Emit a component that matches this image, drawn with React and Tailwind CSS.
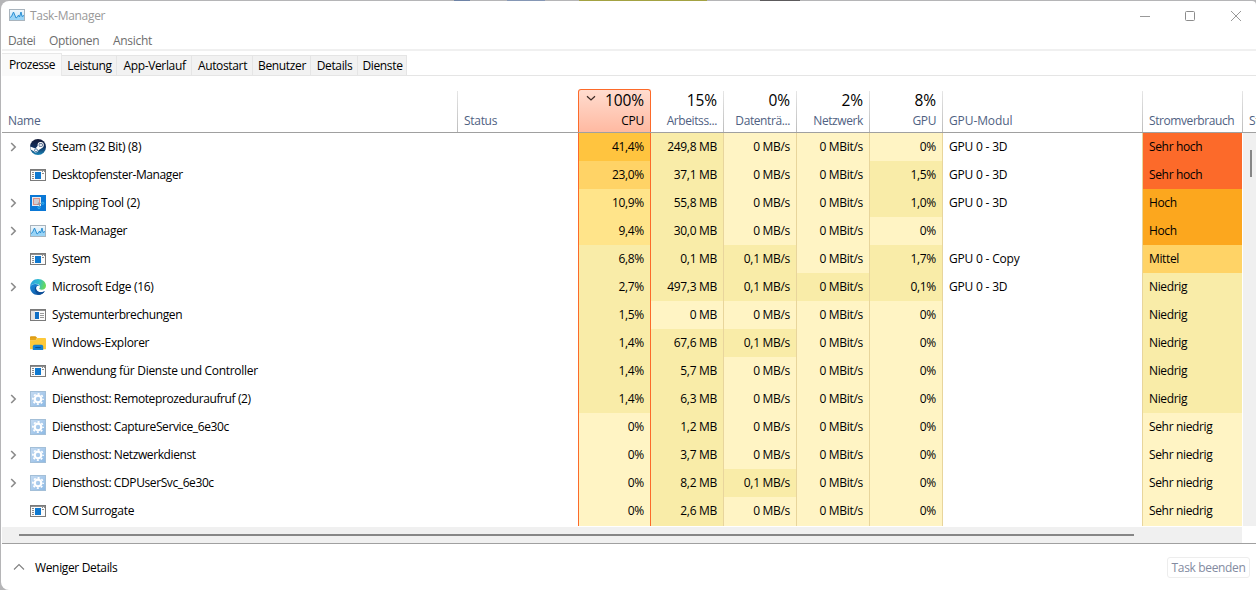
import React from 'react';

const WindowIcon = ({ variant }) => (
    <svg width="16" height="16" viewBox="0 0 16 16" shapeRendering="crispEdges">
        <rect x="0" y="2" width="16" height="12" fill="#7a7a7a" />
        <rect x="1" y="4" width="14" height="9" fill="#fbfbfb" />
        <rect x="1" y="3" width="14" height="1" fill="#8d8d8d" />
        {variant === 'doc' ? (
            <>
                <rect x="1" y="4" width="4" height="9" fill="#e3e3e3" />
                <rect x="5" y="5" width="4" height="7" fill="#0f6fc5" />
                <path d="M10 6.5h4M10 8.5h4M10 10.5h4" stroke="#9a9a9a" />
            </>
        ) : (
            <>
                <rect x="5" y="5" width="6" height="7" fill="#0f78cf" />
                <path d="M2 5.5h2M2 7.5h2M2 9.5h2M2 11.5h2M12 4.5h1M14 4.5h1M12 6.5h2" stroke="#8a8a8a" />
            </>
        )}
    </svg>
);

const TaskIcon = () => (
    <svg width="16" height="16" viewBox="0 0 16 16">
        <defs>
            <linearGradient id="taskBg" x1="0" y1="0" x2="0" y2="1">
                <stop offset="0" stopColor="#f4f8fb" />
                <stop offset="1" stopColor="#b9e2fa" />
            </linearGradient>
        </defs>
        <rect x="0.5" y="2.5" width="15" height="11" fill="url(#taskBg)" stroke="#a9b4bd" />
        <path d="M1 10.5L2.5 9.5L4.5 5L7 11L8.5 10L9.5 8L10.5 10L12 5L13 9.5L15 8.5V13H1z" fill="#9ad4f6" />
        <path d="M1 10.5L2.5 9.5L4.5 5L7 11L8.5 10L9.5 8L10.5 10L12 5L13 9.5L15 8.5" fill="none" stroke="#2a8fd3" />
    </svg>
);

const SteamIcon = () => (
    <svg width="16" height="16" viewBox="0 0 16 16">
        <defs>
            <linearGradient id="steamBg" x1="0" y1="0" x2="0" y2="1">
                <stop offset="0" stopColor="#141a36" />
                <stop offset="0.5" stopColor="#10305f" />
                <stop offset="1" stopColor="#1a86b8" />
            </linearGradient>
        </defs>
        <circle cx="8" cy="8" r="8" fill="url(#steamBg)" />
        <path d="M0.2 7.5L5.4 9.4L8 6.6L12 9L8.4 11.2C8 13.6 5 14.2 3.8 12.2L0.7 10.6z" fill="#fff" />
        <circle cx="10.7" cy="6" r="3.1" fill="#fff" />
        <circle cx="10.7" cy="6" r="2.1" fill="#173460" />
        <circle cx="10.7" cy="6" r="1.5" fill="#dfe5ec" />
        <circle cx="6" cy="11.3" r="1.5" fill="none" stroke="#17508a" strokeWidth="0.7" />
    </svg>
);

const SnipIcon = () => (
    <svg width="16" height="16" viewBox="0 0 16 16">
        <rect width="16" height="16" fill="#0a78d6" />
        <rect x="2" y="2" width="9" height="9" fill="#e9e9ec" />
        <rect x="3.5" y="3.5" width="6" height="6" fill="#cfcdd2" stroke="#d9452b" strokeDasharray="1 1" />
        <path d="M8.5 7.5L10 12M7 9.5L12 8" stroke="#8a97a5" />
        <circle cx="9" cy="12.5" r="1.1" fill="none" stroke="#36b4f2" />
        <circle cx="12.8" cy="8.3" r="1.1" fill="none" stroke="#36b4f2" />
    </svg>
);

const EdgeIcon = () => (
    <svg width="16" height="16" viewBox="0 0 16 16">
        <defs>
            <linearGradient id="edgeTop" x1="0" y1="0.3" x2="1" y2="0.5">
                <stop offset="0" stopColor="#2a9fe0" />
                <stop offset="0.5" stopColor="#2fbcd0" />
                <stop offset="1" stopColor="#6bdc52" />
            </linearGradient>
            <linearGradient id="edgeLow" x1="0" y1="0" x2="1" y2="1">
                <stop offset="0" stopColor="#1b8fe0" />
                <stop offset="1" stopColor="#0c4a94" />
            </linearGradient>
        </defs>
        <path d="M0.1 8C0.1 3.5 3.6 0 8 0C12.6 0 16 3.3 16 6.7C16 9.3 14 10.8 11.8 10.8C10 10.8 9 10.2 9.2 9.6C9.6 9 9.9 8.6 9.9 7.9C9.9 6 8 4.8 5.7 4.8C2.6 4.8 0.5 6.6 0.1 8z" fill="url(#edgeTop)" />
        <path d="M0.1 8C0.3 6.4 2.3 4.9 5.2 4.9C7.4 4.9 8.8 5.9 9.3 6.8C7 6.2 6 7.9 6 9.3C6 12 8.6 13.4 11.2 13.2C12.6 13 13.9 12.4 14.8 12C13.4 14.5 10.8 16 8 16C3.4 16 0 12.5 0.1 8z" fill="url(#edgeLow)" />
        <path d="M5.2 8C4 11.5 6.3 15 9.5 15.8C11.8 15.4 13.8 14 14.9 12.2C12 13.8 7.2 13.6 6.2 10.2C5.9 9.2 6 8.2 6.6 7.2z" fill="#0d4d96" />
    </svg>
);

const FolderIcon = () => (
    <svg width="16" height="16" viewBox="0 0 16 16">
        <path d="M0 2.3Q0 1.3 1 1.3H5.5L7.5 3.3H0z" fill="#dc9a10" />
        <path d="M0 5.3H5.5L7.5 3H15Q16 3 16 4V14.3H0z" fill="#fdc93a" />
        <path d="M0 2.8H7L5.6 5.3H0z" fill="#e5a51b" />
        <path d="M2.8 15V11.5Q2.8 9.8 4.5 9.8H11.5Q13.2 9.8 13.2 11.5V15z" fill="#1580d0" />
        <path d="M5.3 12.6H10.7" stroke="#0a4c8c" />
    </svg>
);

const GearIcon = () => (
    <svg width="16" height="16" viewBox="0 0 16 16">
        <defs>
            <linearGradient id="gearBg" x1="0" y1="0" x2="1" y2="1">
                <stop offset="0" stopColor="#c5dbf2" />
                <stop offset="1" stopColor="#8db9e4" />
            </linearGradient>
        </defs>
        <rect x="0.5" y="0.5" width="15" height="15" fill="url(#gearBg)" stroke="#a3bfd8" />
        <circle cx="8" cy="8" r="3.3" fill="none" stroke="#fff" strokeWidth="2.2" />
        <circle cx="8" cy="8" r="5.1" fill="none" stroke="#fff" strokeWidth="1.7" strokeDasharray="2 2.005" strokeDashoffset="1" />
    </svg>
);

const icons = {
    steam: <SteamIcon />,
    window: <WindowIcon />,
    doc: <WindowIcon variant="doc" />,
    snip: <SnipIcon />,
    task: <TaskIcon />,
    edge: <EdgeIcon />,
    folder: <FolderIcon />,
    gear: <GearIcon />,
};

// heat levels, from idle to very busy
const heat = [
    'bg-[#fff4c4]',
    'bg-[#f9eca8]',
    'bg-[#ffe48a]',
    'bg-[#ffd366]',
    'bg-[#ffc43f]',
];

const powerHeat = {
    'Sehr hoch': 'bg-[#fc6a2a]',
    'Hoch': 'bg-[#fca71e]',
    'Mittel': 'bg-[#ffd366]',
    'Niedrig': 'bg-[#f9eca8]',
    'Sehr niedrig': 'bg-[#fff4c4]',
};

const processes = [
    { name: 'Steam (32 Bit) (8)', icon: 'steam', group: true, cpu: '41,4%', level: 4, mem: '249,8 MB', disk: '0 MB/s', gpu: '0%', engine: 'GPU 0 - 3D', power: 'Sehr hoch' },
    { name: 'Desktopfenster-Manager', icon: 'window', tight: true, cpu: '23,0%', level: 3, mem: '37,1 MB', disk: '0 MB/s', gpu: '1,5%', engine: 'GPU 0 - 3D', power: 'Sehr hoch' },
    { name: 'Snipping Tool (2)', icon: 'snip', group: true, cpu: '10,9%', level: 2, mem: '55,8 MB', disk: '0 MB/s', gpu: '1,0%', engine: 'GPU 0 - 3D', power: 'Hoch' },
    { name: 'Task-Manager', icon: 'task', group: true, cpu: '9,4%', level: 2, mem: '30,0 MB', disk: '0 MB/s', gpu: '0%', power: 'Hoch' },
    { name: 'System', icon: 'window', cpu: '6,8%', level: 1, mem: '0,1 MB', disk: '0,1 MB/s', gpu: '1,7%', engine: 'GPU 0 - Copy', power: 'Mittel' },
    { name: 'Microsoft Edge (16)', icon: 'edge', group: true, cpu: '2,7%', level: 1, mem: '497,3 MB', disk: '0,1 MB/s', net: 1, gpu: '0,1%', engine: 'GPU 0 - 3D', power: 'Niedrig' },
    { name: 'Systemunterbrechungen', icon: 'doc', tight: true, cpu: '1,5%', level: 1, mem: '0 MB', disk: '0 MB/s', gpu: '0%', power: 'Niedrig' },
    { name: 'Windows-Explorer', icon: 'folder', cpu: '1,4%', level: 1, mem: '67,6 MB', disk: '0,1 MB/s', gpu: '0%', power: 'Niedrig' },
    { name: 'Anwendung für Dienste und Controller', icon: 'window', cpu: '1,4%', level: 1, mem: '5,7 MB', disk: '0 MB/s', gpu: '0%', power: 'Niedrig' },
    { name: 'Diensthost: Remoteprozeduraufruf (2)', icon: 'gear', group: true, tight: true, cpu: '1,4%', level: 1, mem: '6,3 MB', disk: '0 MB/s', gpu: '0%', power: 'Niedrig' },
    { name: 'Diensthost: CaptureService_6e30c', icon: 'gear', tight: true, cpu: '0%', level: 0, mem: '1,2 MB', disk: '0 MB/s', gpu: '0%', power: 'Sehr niedrig' },
    { name: 'Diensthost: Netzwerkdienst', icon: 'gear', group: true, tight: true, cpu: '0%', level: 0, mem: '3,7 MB', disk: '0 MB/s', gpu: '0%', power: 'Sehr niedrig' },
    { name: 'Diensthost: CDPUserSvc_6e30c', icon: 'gear', group: true, tight: true, cpu: '0%', level: 0, mem: '8,2 MB', disk: '0,1 MB/s', gpu: '0%', power: 'Sehr niedrig' },
    { name: 'COM Surrogate', icon: 'window', cpu: '0%', level: 0, mem: '2,6 MB', disk: '0 MB/s', gpu: '0%', power: 'Sehr niedrig' },
];

const tabs = [
    { label: 'Leistung', width: 'w-[55px]' },
    { label: 'App-Verlauf', width: 'w-[75px]' },
    { label: 'Autostart', width: 'w-[61px]' },
    { label: 'Benutzer', width: 'w-[58px]' },
    { label: 'Details', width: 'w-[47px]' },
    { label: 'Dienste', width: 'w-[49px]' },
];

const Cell = ({ value, level }) => (
    <div className={`border-r border-[#e8d59c] px-[6px] text-right ${heat[level]}`}>{value}</div>
);

const Row = ({ p }) => (
    <div className="grid h-7 grid-cols-[456px_120px_73px_73px_73px_73px_73px_200px_99px] leading-[27px] last:h-[29px]">
        <div className="flex h-7 items-center">
            <span className="flex w-7 pl-[8px]">
                {p.group && (
                    <svg width="7" height="10" viewBox="0 0 7 10">
                        <path d="M1.2 1L5.2 5L1.2 9" fill="none" stroke="#8b8b8b" strokeWidth="1.6" />
                    </svg>
                )}
            </span>
            {icons[p.icon]}
            <span className={`mb-px ml-[6px] whitespace-nowrap leading-[26px] ${p.tight ? 'tracking-[-0.4px]' : ''}`}>{p.name}</span>
        </div>
        <div />
        <div className={`border-x border-[#fc6a2a] px-[6px] text-right ${heat[p.level]}`}>{p.cpu}</div>
        <Cell value={p.mem} level={p.mem === '0 MB' ? 0 : 1} />
        <Cell value={p.disk} level={p.disk === '0 MB/s' ? 0 : 1} />
        <Cell value="0 MBit/s" level={p.net || 0} />
        <Cell value={p.gpu} level={p.gpu === '0%' ? 0 : 1} />
        <div className="border-r border-[#e8d59c] pl-[6px] tracking-[-0.2px]">{p.engine}</div>
        <div className={`pl-[6px] tracking-[-0.35px] ${powerHeat[p.power]}`}>{p.power}</div>
    </div>
);

const Divider = () => <div className="h-[41px] w-px shrink-0 self-end bg-linear-to-b from-[#e6e6e6] to-[#bdbdbd]" />;

const Metric = ({ total, label }) => (
    <>
        <div className="flex w-[72px] shrink-0 flex-col justify-end pr-[6px] pb-px text-right">
            <span className="text-[15.5px] leading-[21px] tracking-[-0.1px] text-black">{total}</span>
            <span className="leading-5 tracking-[-0.4px]">{label}</span>
        </div>
        <Divider />
    </>
);

const TableHead = () => (
    <div className="flex h-[57px] border-b border-[#a0a0a0] text-[#4f6182]">
        <div className="flex w-[455px] shrink-0 items-end pl-[6px] leading-[23px]">Name</div>
        <Divider />
        <div className="flex w-[120px] shrink-0 items-end pl-[6px] leading-[23px]">Status</div>
        <div className="mt-[13px] flex w-[73px] shrink-0 justify-between rounded-t-[3px] border border-b-0 border-[#fc6a2a] bg-linear-to-b from-[#ffdccf] to-[#ffb9a1] pr-[6px] pl-[7px] text-black">
            <svg className="mt-[5px]" width="10" height="7" viewBox="0 0 10 7">
                <path d="M1 1.2L5 5L9 1.2" fill="none" stroke="#3b2a25" strokeWidth="1.2" />
            </svg>
            <div className="flex flex-col justify-end pb-px text-right">
                <span className="text-[15.5px] leading-[21px] tracking-[-0.1px]">100%</span>
                <span className="leading-5">CPU</span>
            </div>
        </div>
        <Metric total="15%" label="Arbeitss..." />
        <Metric total="0%" label="Datenträ..." />
        <Metric total="2%" label="Netzwerk" />
        <Metric total="8%" label="GPU" />
        <div className="flex w-[199px] shrink-0 items-end pl-[6px] leading-[23px] tracking-[-0.1px]">GPU-Modul</div>
        <Divider />
        <div className="flex w-[99px] shrink-0 items-end pl-[6px] leading-[23px] tracking-[-0.42px]">Stromverbrauch</div>
        <Divider />
        <div className="flex w-[13px] items-end overflow-hidden pl-[6px] leading-[23px]">St</div>
    </div>
);

const App = () => (
    <div className="h-[590px] w-[1256px] overflow-hidden bg-[#b5b5b7] font-['Open_Sans','Noto_Sans',sans-serif] text-xs tracking-[-0.3px] text-black">
        <div className="flex h-px">
            <span className="ml-[454px] w-[16px] bg-[#6e83a6]" />
            <span className="ml-[37px] w-[38px] bg-[#8597b5]" />
            <span className="ml-[34px] w-[128px] bg-[#a3a242]" />
            <span className="ml-[53px] w-[40px] bg-[#5c5a5c]" />
        </div>
        <div className="ml-px flex h-[589px] flex-col rounded-l-lg rounded-tr-[4px] bg-white pl-px">
            <div className="flex h-[30px] items-center pl-[7px] text-[#999]">
                <span className="mb-[2px]"><TaskIcon /></span>
                <span className="ml-[5px]">Task-Manager</span>
                <div className="mb-px ml-auto flex items-center pr-[14px]">
                    <svg className="mr-[33px]" width="12" height="12" viewBox="0 0 12 12"><path d="M1 6.5h10" stroke="#999" /></svg>
                    <svg className="mr-[34px]" width="12" height="12" viewBox="0 0 12 12"><rect x="1.5" y="1.5" width="9" height="9" rx="1" fill="none" stroke="#8c8c8c" /></svg>
                    <svg width="12" height="12" viewBox="0 0 12 12"><path d="M1 1l10 10M11 1L1 11" stroke="#999" /></svg>
                </div>
            </div>
            <div className="flex h-[20px] gap-[8px] border-b-2 border-[#f0f0f0] pl-[6px] leading-[19px] text-[#6d6d6d]">
                <span className="w-[33px] tracking-[-0.4px]">Datei</span>
                <span className="w-[56px]">Optionen</span>
                <span>Ansicht</span>
            </div>
            <div className="flex h-[25px] items-end">
                <div className="h-[23px] w-[60px] border-t border-r border-[#e8e8e8] bg-[#fafafa] pl-[7px] leading-[21px] tracking-[-0.5px]">Prozesse</div>
                <div className="flex grow border-b border-[#e5e5e5]">
                    {tabs.map((t) => (
                        <div key={t.label} className={`h-[20px] border-t border-r border-[#e5e5e5] bg-[#f2f2f2] pl-px text-center leading-[20px] tracking-[-0.35px] ${t.width}`}>{t.label}</div>
                    ))}
                </div>
            </div>
            <TableHead />
            <div className="flex h-[393px]">
                <div className="w-[1240px]">
                    {processes.map((p) => <Row key={p.name} p={p} />)}
                </div>
                <div className="ml-px flex grow justify-center bg-[#f0f0f0] pl-[3px]">
                    <div className="mt-[17px] h-[27px] w-[2px] bg-[#868686]" />
                </div>
            </div>
            <div className="mt-px flex h-[16px] w-[1240px] items-center bg-[#f0f0f0] pl-[17px]">
                <div className="h-[2px] w-[1115px] bg-[#868686]" />
            </div>
            <div className="flex grow items-center border-t border-[#a0a0a0] pr-[6px] pl-[11px]">
                <svg width="12" height="8" viewBox="0 0 12 8">
                    <path d="M1 6.5L6 1.5L11 6.5" fill="none" stroke="#808080" strokeWidth="1.1" />
                </svg>
                <span className="mt-px ml-[10px] tracking-[-0.35px]">Weniger Details</span>
                <button className="ml-auto h-[21px] w-[83px] rounded-[3px] border border-[#ededed] leading-[19px] tracking-[-0.35px] text-[#838ba1]">Task beenden</button>
            </div>
        </div>
    </div>
);

export default App;
